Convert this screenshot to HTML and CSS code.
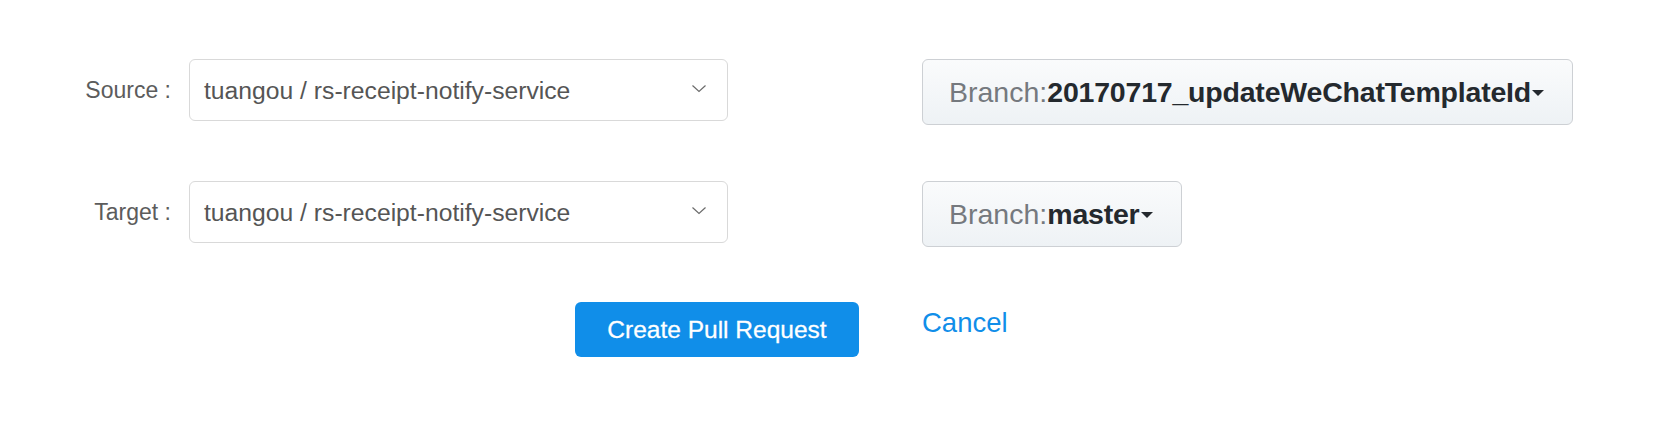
FILE: index.html
```html
<!DOCTYPE html>
<html lang="en">
<head>
<meta charset="utf-8">
<title>New Pull Request</title>
<link rel="stylesheet" href="styles.css">
</head>
<body>
<div class="form">
  <div class="row">
    <div class="label">Source :</div>
    <div class="select">
      <span class="select-text">tuangou / rs-receipt-notify-service</span>
      <svg class="chev" width="16" height="9" viewBox="0 0 16 9"><polyline points="1.5,1.5 8,7.5 14.5,1.5" fill="none" stroke="#6b6b6b" stroke-width="1.2"/></svg>
    </div>
    <div class="branch-cell">
      <button class="branch"><span class="branch-key">Branch:</span><span class="branch-val">20170717_updateWeChatTemplateId</span><span class="caret"></span></button>
    </div>
  </div>
  <div class="row row2">
    <div class="label">Target :</div>
    <div class="select">
      <span class="select-text">tuangou / rs-receipt-notify-service</span>
      <svg class="chev" width="16" height="9" viewBox="0 0 16 9"><polyline points="1.5,1.5 8,7.5 14.5,1.5" fill="none" stroke="#6b6b6b" stroke-width="1.2"/></svg>
    </div>
    <div class="branch-cell">
      <button class="branch"><span class="branch-key">Branch:</span><span class="branch-val">master</span><span class="caret"></span></button>
    </div>
  </div>
  <div class="actions">
    <button class="primary">Create Pull Request</button>
    <a class="cancel" href="#">Cancel</a>
  </div>
</div>
</body>
</html>
```
FILE: styles.css
```css
html, body {
  margin: 0;
  padding: 0;
  background: #ffffff;
}
body {
  font-family: "Liberation Sans", Arial, Helvetica, sans-serif;
  color: #595959;
}
.form {
  padding-top: 59px;
}
.row {
  display: flex;
  align-items: flex-start;
}
.row2 {
  margin-top: 56px;
}
.label {
  width: 189px;
  box-sizing: border-box;
  padding-right: 18px;
  text-align: right;
  font-size: 23px;
  line-height: 62px;
  height: 62px;
  color: #5c5c5c;
  white-space: nowrap;
}
.select {
  width: 539px;
  height: 62px;
  box-sizing: border-box;
  border: 1px solid #d9d9d9;
  border-radius: 6px;
  display: flex;
  align-items: center;
  justify-content: space-between;
  padding: 0 20px 0 14px;
  background: #fff;
}
.select-text {
  font-size: 24.7px;
  color: #555555;
  padding-top: 2px;
}
.chev {
  display: block;
  margin-top: -4px;
}
.branch-cell {
  margin-left: 194px;
}
.branch {
  display: flex;
  align-items: center;
  height: 66px;
  box-sizing: border-box;
  padding: 0 28px 0 26px;
  border: 1.5px solid #cdd0d4;
  border-radius: 6px;
  background: linear-gradient(#fafbfc, #eef2f5);
  font-family: "Liberation Sans", Arial, Helvetica, sans-serif;
  font-size: 28.5px;
  cursor: pointer;
}
.branch-key {
  color: #75797e;
}
.branch-val {
  color: #24292e;
  font-weight: bold;
  letter-spacing: -0.2px;
}
.caret {
  display: inline-block;
  width: 0;
  height: 0;
  border-left: 6px solid transparent;
  border-right: 6px solid transparent;
  border-top: 6px solid #24292e;
  margin-left: 1px;
  margin-top: 2px;
}
.actions {
  display: flex;
  align-items: flex-start;
  margin-top: 55px;
  padding-left: 575px;
}
.primary {
  width: 284px;
  height: 55px;
  border: none;
  border-radius: 6px;
  background: #108ee9;
  color: #ffffff;
  font-family: "Liberation Sans", Arial, Helvetica, sans-serif;
  font-size: 24.5px;
  -webkit-text-stroke: 0.3px #ffffff;
  padding: 0;
  cursor: pointer;
}
.cancel {
  margin-left: 63px;
  margin-top: 6px;
  font-size: 27.5px;
  line-height: 30px;
  color: #108ee9;
  text-decoration: none;
}
```
